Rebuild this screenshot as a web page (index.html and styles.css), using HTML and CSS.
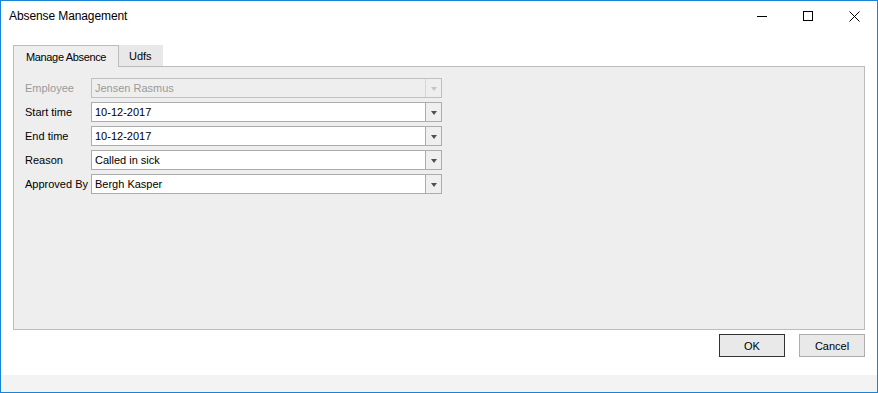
FILE: index.html
```html
<!DOCTYPE html>
<html>
<head>
<meta charset="utf-8">
<link rel="stylesheet" href="styles.css">
</head>
<body>
<div class="window">
  <div class="titlebar">
    <div class="title">Absense Management</div>
    <div class="controls">
      <span class="ctl"><svg width="10" height="10" viewBox="0 0 10 10"><path d="M0 5.5H10" stroke="#000" stroke-width="1"/></svg></span>
      <span class="ctl"><svg width="10" height="10" viewBox="0 0 10 10"><rect x="0.5" y="0.5" width="9" height="9" fill="none" stroke="#000" stroke-width="1"/></svg></span>
      <span class="ctl"><svg width="11" height="11" viewBox="0 0 11 11"><path d="M0.5 0.5L10.5 10.5M10.5 0.5L0.5 10.5" stroke="#000" stroke-width="1"/></svg></span>
    </div>
  </div>
  <div class="content">
    <div class="tabs">
      <div class="tab active">Manage Absence</div>
      <div class="tab udfs">Udfs</div>
      <div class="tab-fill"></div>
    </div>
    <div class="panel">
      <div class="row disabled">
        <div class="label">Employee</div>
        <div class="combo"><div class="value">Jensen Rasmus</div><div class="btn"><span class="arrow"></span></div></div>
      </div>
      <div class="row">
        <div class="label">Start time</div>
        <div class="combo"><div class="value">10-12-2017</div><div class="btn"><span class="arrow"></span></div></div>
      </div>
      <div class="row">
        <div class="label">End time</div>
        <div class="combo"><div class="value">10-12-2017</div><div class="btn"><span class="arrow"></span></div></div>
      </div>
      <div class="row">
        <div class="label">Reason</div>
        <div class="combo"><div class="value">Called in sick</div><div class="btn"><span class="arrow"></span></div></div>
      </div>
      <div class="row">
        <div class="label">Approved By</div>
        <div class="combo"><div class="value">Bergh Kasper</div><div class="btn"><span class="arrow"></span></div></div>
      </div>
    </div>
    <div class="actions">
      <button class="button default">OK</button>
      <button class="button">Cancel</button>
    </div>
  </div>
  <div class="status"></div>
</div>
</body>
</html>
```
FILE: styles.css
```css
html, body {
  margin: 0;
  padding: 0;
  background: #fff;
}
body {
  font-family: "Liberation Sans", Arial, sans-serif;
  font-size: 11px;
  color: #000;
}
.window {
  width: 878px;
  height: 393px;
  box-sizing: border-box;
  border: 1px solid #1883d7;
  background: #fff;
  display: flex;
  flex-direction: column;
}
.titlebar {
  height: 30px;
  display: flex;
  align-items: center;
  padding-left: 8px;
}
.title {
  font-size: 12px;
  flex: 1;
  padding-bottom: 1px;
  letter-spacing: -0.1px;
}
.controls {
  display: flex;
  height: 30px;
}
.ctl {
  width: 46px;
  height: 30px;
  display: flex;
  align-items: center;
  justify-content: center;
}
.content {
  flex: 1;
  padding: 14px 12px 0 12px;
}
.tabs {
  display: flex;
  height: 22px;
}
.tab {
  box-sizing: border-box;
  height: 22px;
  padding: 1px 0 0 12px;
  display: flex;
  align-items: center;
  background: #e8e8e8;
  border-bottom: 1px solid #bcbcbc;
  white-space: nowrap;
}
.tab.active {
  width: 106px;
  background: #eeeeee;
  border: 1px solid #bcbcbc;
  border-bottom: 0;
  padding-top: 0;
  letter-spacing: -0.35px;
}
.tab.udfs {
  width: 44px;
  padding-left: 10px;
}
.tab-fill {
  flex: 1;
  border-bottom: 1px solid #bcbcbc;
}
.panel {
  height: 263px;
  box-sizing: border-box;
  background: #eeeeee;
  border: 1px solid #bcbcbc;
  border-top: 0;
  padding: 11px 11px 0 11px;
  display: flex;
  flex-direction: column;
  gap: 4px;
}
.row {
  display: flex;
  align-items: center;
  height: 20px;
}
.label {
  width: 66px;
  white-space: nowrap;
}
.combo {
  width: 351px;
  height: 20px;
  box-sizing: border-box;
  border: 1px solid #acacac;
  background: #fff;
  display: flex;
}
.value {
  flex: 1;
  padding-left: 3px;
  display: flex;
  align-items: center;
}
.btn {
  width: 15px;
  border-left: 1px solid #acacac;
  background: #efefef;
  display: flex;
  align-items: center;
  justify-content: center;
}
.arrow {
  width: 0;
  height: 0;
  border-left: 3.5px solid transparent;
  border-right: 3.5px solid transparent;
  border-top: 4px solid #505050;
  margin-top: 1px;
}
.row.disabled .label,
.row.disabled .value {
  color: #9a9a9a;
}
.row.disabled .combo {
  background: #eeeeee;
  border-color: #c0c0c0;
}
.row.disabled .btn {
  border-left-color: #d6d6d6;
  background: #eeeeee;
}
.row.disabled .arrow {
  border-top-color: #c4c4c4;
}
.actions {
  display: flex;
  justify-content: flex-end;
  gap: 14px;
  margin-top: 4px;
}
.button {
  width: 66px;
  height: 23px;
  box-sizing: border-box;
  border: 1px solid #adadad;
  background: #e9e9e9;
  font-family: inherit;
  font-size: 11px;
  color: #000;
  padding: 0;
  margin: 0;
}
.button.default {
  border-color: #333333;
}
.status {
  height: 17px;
  background: #f3f3f3;
}
```
